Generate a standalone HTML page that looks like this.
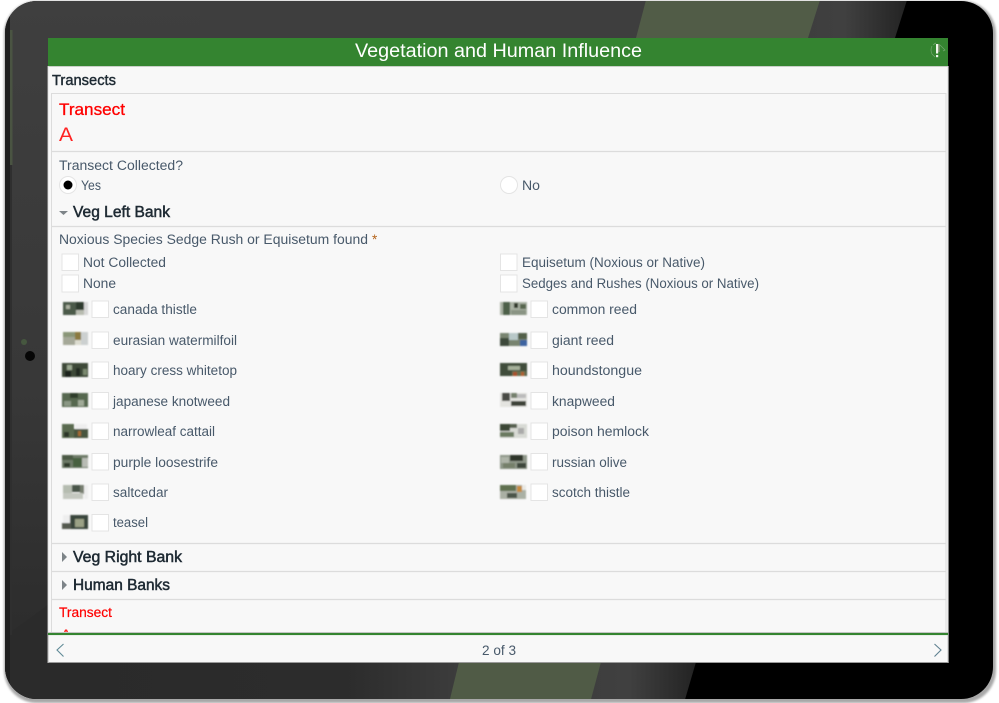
<!DOCTYPE html>
<html lang="en"><head><meta charset="utf-8"><title>Vegetation and Human Influence</title>
<style>
html,body{margin:0;padding:0;width:999px;height:703px;overflow:hidden;background:#fff}
svg{display:block}
text{font-family:"Liberation Sans",sans-serif;white-space:pre}
.l{font-size:13.5px;fill:#48596a}
.h{font-size:15.5px;fill:#1e2a33;stroke:#1e2a33;stroke-width:.5}
.cb{fill:#fff;stroke:#e4e4e4;stroke-width:1}
.ln{stroke:#dcdcdc;stroke-width:1.2}
</style></head><body>
<svg width="999" height="703" viewBox="0 0 999 703" xmlns="http://www.w3.org/2000/svg">
<defs>
<clipPath id="tab"><rect x="5" y="1" width="988" height="698" rx="32"/></clipPath>
<clipPath id="body"><rect x="48" y="66" width="900" height="566"/></clipPath>
<filter id="bl" x="-10%" y="-10%" width="120%" height="120%"><feGaussianBlur stdDeviation=".7"/></filter>
<filter id="sh" x="-5%" y="-5%" width="110%" height="110%"><feGaussianBlur stdDeviation="1"/></filter>
<linearGradient id="lg" x1="0" y1="0" x2="0" y2="1"><stop offset="0" stop-color="#3f3f3f"/><stop offset=".55" stop-color="#383838"/><stop offset=".85" stop-color="#2e2e2e"/><stop offset="1" stop-color="#2a2a2a"/></linearGradient>
<linearGradient id="t1" x1="0" y1="0" x2="1" y2="0"><stop offset="0" stop-color="#3e3e3e"/><stop offset=".4" stop-color="#404040"/><stop offset="1" stop-color="#232323"/></linearGradient>
<linearGradient id="b0" x1="0" y1="0" x2="1" y2="0"><stop offset="0" stop-color="#2a2a2a"/><stop offset=".72" stop-color="#2c2c2c"/><stop offset="1" stop-color="#3d3d3d"/></linearGradient>
</defs>

<rect x="4" y="1" width="992" height="702" rx="33" fill="#a8a8a8" filter="url(#sh)"/>
<g clip-path="url(#tab)">
<rect x="0" y="0" width="999" height="703" fill="#000"/>
<polygon points="0,0 650,0 640,38 462,662 452,703 0,703" fill="url(#lg)"/>
<polygon points="0,703 0,640 48,605 48,703" fill="#2b2b2b"/>
<rect x="40" y="660" width="425" height="43" fill="url(#b0)"/>
<rect x="200" y="0" width="450" height="38" fill="#3e3e3e"/>
<polygon points="815,0 907,0 895,38 803,38" fill="url(#t1)"/>
<polygon points="646,0 820,0 808,38 636,38" fill="#515c47"/>
<polygon points="595,662 696,662 684,703 585,703" fill="url(#t1)"/>
<polygon points="459,662 601,662 590,703 449,703" fill="#505b46"/>
<rect x="5" y="0" width="5" height="703" fill="#1f1f1f"/>
<rect x="10" y="30" width="2.500" height="135" fill="#4a5442"/>
<rect x="10" y="165" width="2" height="470" fill="#2f2f2f"/>
<circle cx="24" cy="342" r="3" fill="#46573f"/>
<circle cx="30" cy="356" r="5" fill="#060606"/>
</g>

<rect x="48" y="38" width="900" height="624.500" fill="#f8f8f8"/>
<rect x="48" y="38" width="900" height="28" fill="#348430"/>
<rect x="48" y="66" width="900" height="1" fill="#c9cfc8"/>
<rect x="947.600" y="66" width="1" height="597" fill="#d8d8d8"/>
<rect x="47.600" y="66" width="1" height="597" fill="#e4e4e4"/>
<text x="355" y="57" font-size="19" fill="#fff" textLength="287" lengthAdjust="spacingAndGlyphs">Vegetation and Human Influence</text>
<g fill="none" stroke="#74a670" stroke-width=".7">
<path d="M932 46a9 9 0 0 0 0 8l3 3"/><path d="M936 43a12 12 0 0 0-3 2"/>
<path d="M940 45l5 5-2 1"/></g>
<rect x="936" y="44" width="2.200" height="9.500" fill="#f2f7ee"/><rect x="936" y="55" width="2.200" height="2.200" fill="#f2f7ee"/>
<rect x="938.200" y="44" width="1.400" height="8" fill="#8f9a80"/>

<text x="52" y="85" font-size="14.5" fill="#1e2a33" stroke="#1e2a33" stroke-width=".4" textLength="64" lengthAdjust="spacingAndGlyphs">Transects</text>
<path d="M51.500 632V93.500H946V632" fill="none" stroke="#dcdcdc" stroke-width="1"/>
<text x="59" y="115" font-size="17" fill="#f00" stroke="#f00" stroke-width=".3" textLength="66" lengthAdjust="spacingAndGlyphs">Transect</text>
<text x="59" y="141" font-size="19" fill="#f22" textLength="14" lengthAdjust="spacingAndGlyphs">A</text>
<line class="ln" x1="52" x2="946" y1="151.500" y2="151.500"/>

<text class="l" x="59" y="170" font-size="14" textLength="124" lengthAdjust="spacingAndGlyphs">Transect Collected?</text>
<circle cx="68" cy="185" r="8.500" fill="#fff" stroke="#e4e4e4"/><circle cx="68" cy="185" r="4.500" fill="#000"/>
<text class="l" x="81" y="190" textLength="20" lengthAdjust="spacingAndGlyphs">Yes</text>
<circle cx="509" cy="185" r="8.500" fill="#fff" stroke="#e4e4e4"/>
<text class="l" x="522" y="190" textLength="18" lengthAdjust="spacingAndGlyphs">No</text>

<path d="M59 211h9l-4.500 4z" fill="#7d8488"/>
<text class="h" x="73" y="217" textLength="97" lengthAdjust="spacingAndGlyphs">Veg Left Bank</text>
<line class="ln" x1="52" x2="946" y1="226.500" y2="226.500"/>
<text class="l" x="59" y="244" textLength="309" lengthAdjust="spacingAndGlyphs">Noxious Species Sedge Rush or Equisetum found</text>
<text x="372" y="244" font-size="13.500" fill="#b5651d">*</text>

<g>
<rect class="cb" x="62" y="254" width="16.500" height="16.500"/>
<rect class="cb" x="62" y="275" width="16.500" height="17"/>
<rect class="cb" x="500.500" y="254" width="16.500" height="16.500"/>
<rect class="cb" x="500.500" y="275" width="16.500" height="17"/>
<rect class="cb" x="92" y="301" width="16.500" height="16.500"/>
<rect class="cb" x="92" y="332" width="16.500" height="16.500"/>
<rect class="cb" x="92" y="362" width="16.500" height="16.500"/>
<rect class="cb" x="92" y="392.500" width="16.500" height="16.500"/>
<rect class="cb" x="92" y="423" width="16.500" height="16.500"/>
<rect class="cb" x="92" y="453.500" width="16.500" height="16.500"/>
<rect class="cb" x="92" y="484" width="16.500" height="16.500"/>
<rect class="cb" x="92" y="514.500" width="16.500" height="16.500"/>
<rect class="cb" x="531" y="301" width="16.500" height="16.500"/>
<rect class="cb" x="531" y="332" width="16.500" height="16.500"/>
<rect class="cb" x="531" y="362" width="16.500" height="16.500"/>
<rect class="cb" x="531" y="392.500" width="16.500" height="16.500"/>
<rect class="cb" x="531" y="423" width="16.500" height="16.500"/>
<rect class="cb" x="531" y="453.500" width="16.500" height="16.500"/>
<rect class="cb" x="531" y="484" width="16.500" height="16.500"/>
</g>

<text class="l" x="83" y="267" textLength="83" lengthAdjust="spacingAndGlyphs">Not Collected</text>
<text class="l" x="83" y="288" textLength="33" lengthAdjust="spacingAndGlyphs">None</text>
<text class="l" x="522" y="267" textLength="183" lengthAdjust="spacingAndGlyphs">Equisetum (Noxious or Native)</text>
<text class="l" x="522" y="288" textLength="237" lengthAdjust="spacingAndGlyphs">Sedges and Rushes (Noxious or Native)</text>

<text class="l" x="113" y="314" textLength="84" lengthAdjust="spacingAndGlyphs">canada thistle</text>
<text class="l" x="113" y="345" textLength="124" lengthAdjust="spacingAndGlyphs">eurasian watermilfoil</text>
<text class="l" x="113" y="375" textLength="124" lengthAdjust="spacingAndGlyphs">hoary cress whitetop</text>
<text class="l" x="113" y="406" textLength="117" lengthAdjust="spacingAndGlyphs">japanese knotweed</text>
<text class="l" x="113" y="436" textLength="102" lengthAdjust="spacingAndGlyphs">narrowleaf cattail</text>
<text class="l" x="113" y="467" textLength="105" lengthAdjust="spacingAndGlyphs">purple loosestrife</text>
<text class="l" x="113" y="497" textLength="55" lengthAdjust="spacingAndGlyphs">saltcedar</text>
<text class="l" x="113" y="527" textLength="35" lengthAdjust="spacingAndGlyphs">teasel</text>
<text class="l" x="552" y="314" textLength="85" lengthAdjust="spacingAndGlyphs">common reed</text>
<text class="l" x="552" y="345" textLength="62" lengthAdjust="spacingAndGlyphs">giant reed</text>
<text class="l" x="552" y="375" textLength="90" lengthAdjust="spacingAndGlyphs">houndstongue</text>
<text class="l" x="552" y="406" textLength="63" lengthAdjust="spacingAndGlyphs">knapweed</text>
<text class="l" x="552" y="436" textLength="97" lengthAdjust="spacingAndGlyphs">poison hemlock</text>
<text class="l" x="552" y="467" textLength="75" lengthAdjust="spacingAndGlyphs">russian olive</text>
<text class="l" x="552" y="497" textLength="78" lengthAdjust="spacingAndGlyphs">scotch thistle</text>

<g filter="url(#bl)">
<g transform="translate(63,302)"><rect width="13" height="13" fill="#4c5a48"/><rect x="13" width="8" height="8" fill="#2f3a2e"/><rect x="21" width="4" height="13" fill="#d8d8d8"/><rect x="3" y="3" width="4" height="4" fill="#aab0a0"/><rect x="13" y="8" width="8" height="5" fill="#b8bcb0"/></g>
<g transform="translate(63,332)"><rect width="12" height="5" fill="#8a9678"/><rect y="5" width="12" height="8" fill="#a5a898"/><rect x="12" width="6" height="8" fill="#8b7a40"/><rect x="18" width="7" height="13" fill="#ccd0d0"/><rect x="12" y="8" width="6" height="5" fill="#dcdcd0"/></g>
<g transform="translate(62,363)"><rect width="26" height="14" fill="#3d4a38"/><rect x="5" y="2" width="5" height="5" fill="#9aa890"/><rect x="14" y="5" width="4" height="8" fill="#202a20"/><rect x="3" y="8" width="6" height="6" fill="#1a221a"/><rect x="21" y="6" width="4" height="6" fill="#7a8a70"/></g>
<g transform="translate(62,393)"><rect width="26" height="14" fill="#57684f"/><rect x="8" width="8" height="5" fill="#2f3e2c"/><rect x="16" y="7" width="6" height="6" fill="#a0aa98"/><rect x="2" y="8" width="7" height="5" fill="#8b9884"/></g>
<g transform="translate(62,424)"><rect width="12" height="14" fill="#5a6a50"/><rect x="12" y="5" width="14" height="9" fill="#47553e"/><rect x="13" width="12" height="5" fill="#eee"/><rect x="16" y="7" width="3" height="5" fill="#a56a30"/><rect x="2" y="8" width="5" height="5" fill="#2c3628"/></g>
<g transform="translate(62,455)"><rect width="26" height="13" fill="#6d7a68"/><rect width="11" height="5" fill="#4b5a45"/><rect x="11" y="3" width="9" height="9" fill="#46603f"/><rect x="20" y="3" width="6" height="9" fill="#b8bcb4"/><rect x="2" y="8" width="6" height="4" fill="#2e3a2c"/></g>
<g transform="translate(63,485)"><rect width="9" height="8" fill="#b5bcb0"/><rect x="9" width="8" height="7" fill="#4a5548"/><rect x="17" width="5" height="9" fill="#777e70"/><rect y="8" width="20" height="6" fill="#c4c8c0"/><rect x="21" width="4" height="14" fill="#eee"/></g>
<g transform="translate(62,515)"><rect x="8" width="18" height="14" fill="#39443a"/><rect x="0" y="8" width="9" height="6" fill="#555a50"/><rect x="13" y="4" width="9" height="8" fill="#9ba286"/><rect x="1" y="0" width="7" height="8" fill="#eee"/></g>
<g transform="translate(500,302)"><rect width="27" height="13" fill="#aab2a4"/><rect x="3" width="7" height="13" fill="#4e6048"/><rect x="14" y="1" width="4" height="5" fill="#2d372c"/><rect x="20" y="2" width="6" height="5" fill="#56664e"/><rect x="11" y="8" width="15" height="5" fill="#8a9484"/></g>
<g transform="translate(500,333)"><rect width="27" height="13" fill="#788470"/><rect x="9" width="9" height="7" fill="#b8c8c8"/><rect y="5" width="9" height="8" fill="#3d4a3a"/><rect x="20" y="7" width="7" height="6" fill="#3c64a0"/><rect x="18" width="9" height="6" fill="#536048"/></g>
<g transform="translate(500,363)"><rect width="27" height="13" fill="#3f4e3a"/><rect x="8" y="3" width="12" height="4" fill="#a5b09a"/><rect x="12" y="8" width="14" height="5" fill="#65704f"/><rect x="13" y="9" width="4" height="4" fill="#a8502a"/><rect x="21" y="9" width="3" height="4" fill="#b06030"/></g>
<g transform="translate(500,393)"><rect width="27" height="14" fill="#e4e4e0"/><rect x="2" width="8" height="8" fill="#4a4c44"/><rect x="11" y="0" width="6" height="5" fill="#75806c"/><rect x="11" y="8" width="15" height="5" fill="#3c4238"/><rect x="17" y="1" width="9" height="4" fill="#bbb"/></g>
<g transform="translate(500,424)"><rect width="27" height="14" fill="#d8dad4"/><rect width="10" height="7" fill="#3a4636"/><rect x="10" width="7" height="4" fill="#57604f"/><rect y="8" width="14" height="5" fill="#6a7a60"/><rect x="18" y="4" width="6" height="6" fill="#aaa"/></g>
<g transform="translate(500,455)"><rect width="27" height="14" fill="#8e9688"/><rect x="10" width="13" height="6" fill="#2e362c"/><rect x="1" y="2" width="8" height="6" fill="#aeb4a8"/><rect x="17" y="8" width="9" height="5" fill="#3e463b"/><rect x="3" y="8" width="12" height="5" fill="#76806a"/></g>
<g transform="translate(500,485)"><rect width="26" height="14" fill="#aab0a4"/><rect width="16" height="6" fill="#5f7050"/><rect x="17" y="1" width="5" height="6" fill="#c48a3c"/><rect x="22" width="4" height="5" fill="#e8e8e4"/><rect x="7" y="8" width="10" height="5" fill="#4b5548"/></g>
</g>

<line class="ln" x1="52" x2="946" y1="543.500" y2="543.500"/>
<path d="M62 552l5 5-5 5z" fill="#7d8488"/>
<text class="h" x="73" y="562" textLength="109" lengthAdjust="spacingAndGlyphs">Veg Right Bank</text>
<line class="ln" x1="52" x2="946" y1="571.500" y2="571.500"/>
<path d="M62 580l5 5-5 5z" fill="#7d8488"/>
<text class="h" x="73" y="590" textLength="97" lengthAdjust="spacingAndGlyphs">Human Banks</text>
<line class="ln" x1="52" x2="946" y1="599.500" y2="599.500" stroke-width="1.500"/>
<text x="59" y="617" font-size="13.500" fill="#f00" stroke="#f00" stroke-width=".2" textLength="53" lengthAdjust="spacingAndGlyphs">Transect</text>
<g clip-path="url(#body)"><text x="60" y="641" font-size="17" fill="#f22" textLength="12" lengthAdjust="spacingAndGlyphs">A</text></g>

<rect x="48" y="632" width="900" height="1" fill="#c4c4c4"/>
<rect x="48" y="633" width="900" height="2.200" fill="#348430"/>
<rect x="48" y="635.200" width="900" height="27" fill="#f8f8f8"/>
<rect x="48" y="662" width="900" height="1" fill="#9a9a9a"/>
<rect x="47.600" y="635" width="1" height="28" fill="#bdbdbd"/>
<rect x="947.600" y="635" width="1" height="28" fill="#bdbdbd"/>
<path d="M63.500 644l-6.500 6 6.500 6.500" fill="none" stroke="#5f8a96" stroke-width="1.100"/>
<path d="M934.500 644l6.500 6-6.500 6.500" fill="none" stroke="#5f8090" stroke-width="1.100"/>
<text class="l" x="482" y="655" textLength="34" lengthAdjust="spacingAndGlyphs">2 of 3</text>
</svg>
</body></html>
